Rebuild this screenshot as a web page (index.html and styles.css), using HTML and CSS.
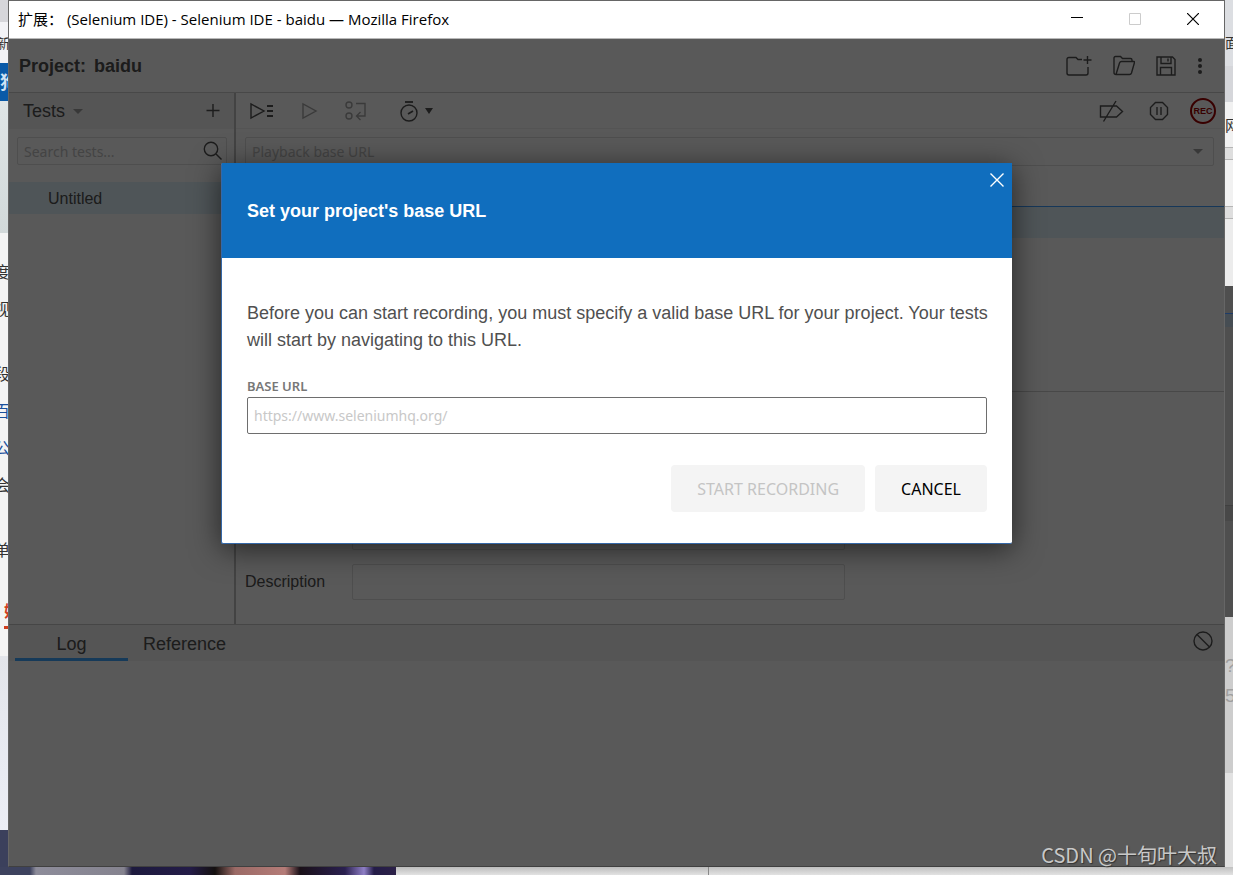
FILE: index.html
```
<!DOCTYPE html>
<html lang="zh-CN">

<head>
    <meta charset="UTF-8">
    <meta name="viewport" content="width=device-width, initial-scale=1.0">
    <title>Selenium IDE - baidu</title>
    <link rel="stylesheet" href="styles.css">
</head>

<body>
    <div class="desktop">
        <!-- left edge of the page behind the window -->
        <div class="behind behind-left">
            <div class="strip tabs-strip"></div>
            <div class="strip bookmark">新</div>
            <div class="strip search-btn">狗</div>
            <div class="strip banner"></div>
            <div class="strip news">
                <span>度</span>
                <span>视</span>
                <span class="gap">段</span>
                <span class="link">百</span>
                <span class="link">公</span>
                <span>会</span>
                <span class="gap">单</span>
                <span class="hot">娱</span>
            </div>
            <div class="strip sky"></div>
            <div class="strip photo-edge"></div>
        </div>

        <div class="window">
            <div class="titlebar">
                <span class="title">扩展： (Selenium IDE) - Selenium IDE - baidu — Mozilla Firefox</span>
                <div class="win-btns">
                    <button aria-label="Minimize">
                        <svg width="12" height="12" viewBox="0 0 12 12"><path d="M0 4.500h12" stroke="#000" stroke-width="1" /></svg>
                    </button>
                    <button aria-label="Maximize" disabled>
                        <svg width="12" height="12" viewBox="0 0 12 12"><path d="M.5.5h11v11H.5z" fill="none" stroke="#ccc" stroke-width="1" /></svg>
                    </button>
                    <button aria-label="Close window">
                        <svg width="12" height="12" viewBox="0 0 12 12"><path d="M0 0l12 12M12 0L0 12" stroke="#000" stroke-width="1.2" /></svg>
                    </button>
                </div>
            </div>

            <div class="ide">
                <header class="project">
                    <h1><span>Project:</span><span>baidu</span></h1>
                    <div class="project-btns">
                        <button aria-label="New project">
                            <svg width="26" height="22" viewBox="0 0 26 22"><path d="M16 4.500h-4l-2-2H3Q1 2.500 1 4.500V18q0 2 2 2h17q2 0 2-2v-6M21.500 1v8M17.500 5h8" /></svg>
                        </button>
                        <button aria-label="Open project">
                            <svg width="22" height="22" viewBox="0 0 22 22"><path d="M3 19.500Q1 19.500 1 17.500V3q0-1.500 1.500-1.500h5l2 2h8q1.500 0 1.500 1.500v1.500M3 19.500L6.500 8q.5-1.500 2-1.500h12.500q.8 0 .5 1L18.500 18q-.5 1.500-2 1.500z" /></svg>
                        </button>
                        <button aria-label="Save project">
                            <svg width="20" height="20" viewBox="0 0 20 20"><path d="M1 1h15.500L19 3.500V19H1zM5 1v6.500h10V1M12 2.500v3M4.500 19v-7.500h11V19" /></svg>
                        </button>
                        <button aria-label="More options">
                            <svg class="solid" width="6" height="16" viewBox="0 0 6 16"><circle cx="3" cy="2" r="2" /><circle cx="3" cy="8" r="2" /><circle cx="3" cy="14" r="2" /></svg>
                        </button>
                    </div>
                </header>

                <div class="main">
                    <aside class="tests">
                        <div class="tests-head">
                            <button class="tests-menu">Tests <i class="caret"></i></button>
                            <button aria-label="Add test">
                                <svg width="14" height="14" viewBox="0 0 14 14"><path d="M7 0v13M.5 6.500h13" /></svg>
                            </button>
                        </div>
                        <div class="search">
                            <input type="text" placeholder="Search tests..." aria-label="Search tests">
                            <svg width="20" height="20" viewBox="0 0 20 20"><circle cx="8" cy="8" r="6.700" /><path d="M13 13l5.500 5.500" /></svg>
                        </div>
                        <a class="test-item" href="#">Untitled</a>
                    </aside>

                    <section class="editor">
                        <div class="toolbar">
                            <button class="run-all" aria-label="Run all tests">
                                <svg width="26" height="18" viewBox="0 0 26 18"><path d="M2 2v14l13-7z" /><path d="M18 4h6M18 9h6M18 14h6" stroke-width="1.800" /></svg>
                            </button>
                            <button class="run faded" aria-label="Run current test">
                                <svg width="16" height="18" viewBox="0 0 16 18"><path d="M1 2v14l13-7z" /></svg>
                            </button>
                            <button class="step faded" aria-label="Step over">
                                <svg width="22" height="20" viewBox="0 0 22 20"><circle cx="4" cy="4" r="3" /><circle cx="4" cy="15" r="3" /><path d="M11 2.500h9v12.500h-8M15.500 11l-4 4 4 4" /></svg>
                            </button>
                            <button class="speed" aria-label="Test execution speed">
                                <svg width="34" height="22" viewBox="0 0 34 22"><circle cx="9" cy="13" r="8" /><path d="M5 2h8" stroke-width="1.800" /><path d="M8 14l5-3" stroke-width="1.800" /><path class="solid" d="M25 8h8l-4 6z" /></svg>
                            </button>
                            <button class="push" aria-label="Disable breakpoints">
                                <svg width="26" height="22" viewBox="0 0 26 22"><path d="M1.500 6h16l6 5.500-6 5.500h-16zM17 1L4.500 21.500" /></svg>
                            </button>
                            <button class="pause" aria-label="Pause on exceptions">
                                <svg width="20" height="20" viewBox="0 0 20 20"><path d="M6.500 1.500h7l5 5v7l-5 5h-7l-5-5v-7zM8 6v8M12 6v8" /></svg>
                            </button>
                            <button class="rec">REC</button>
                        </div>

                        <div class="url-bar">
                            <input type="text" placeholder="Playback base URL" aria-label="Playback base URL">
                            <i class="caret"></i>
                        </div>

                        <div class="commands">
                            <div class="command-row"></div>
                        </div>

                        <form class="fields">
                            <div class="field">
                                <input type="text" aria-label="Value">
                            </div>
                            <div class="field">
                                <label for="description">Description</label>
                                <input type="text" id="description">
                            </div>
                        </form>
                    </section>
                </div>

                <footer class="console">
                    <nav class="tabs">
                        <a class="active" href="#">Log</a>
                        <a href="#">Reference</a>
                        <button aria-label="Clear log">
                            <svg width="20" height="20" viewBox="0 0 20 20"><circle cx="10" cy="10" r="9" /><path d="M4 3.500l12.500 12.500" /></svg>
                        </button>
                    </nav>
                </footer>

                <div class="overlay">
                    <div class="modal" role="dialog" aria-labelledby="modal-title">
                        <div class="modal-head">
                            <h2 id="modal-title">Set your project's base URL</h2>
                            <button class="close" aria-label="Close">
                                <svg width="14" height="14" viewBox="0 0 14 14"><path d="M.5.5l13 13M13.500.5l-13 13" /></svg>
                            </button>
                        </div>
                        <form class="modal-body">
                            <p>Before you can start recording, you must specify a valid base URL for your project. Your tests will start by navigating to this URL.</p>
                            <label for="base-url">BASE URL</label>
                            <input type="text" id="base-url" placeholder="https://www.seleniumhq.org/">
                            <div class="modal-btns">
                                <button type="submit" disabled>START RECORDING</button>
                                <button type="button">CANCEL</button>
                            </div>
                        </form>
                    </div>
                </div>
            </div>
        </div>

        <!-- right edge of the page behind the window -->
        <div class="behind behind-right">
            <div class="strip r-tabs">面</div>
            <div class="strip r-bar"></div>
            <div class="strip r-link">网</div>
            <div class="strip r-line"></div>
            <div class="strip r-white"></div>
            <div class="strip r-line"></div>
            <div class="strip r-blank"></div>
            <div class="strip r-window">
                <div class="r-row"></div>
                <div class="r-log"></div>
            </div>
            <div class="strip r-text"><span>?</span><span>5</span></div>
            <div class="strip r-foot"></div>
        </div>

        <div class="behind-bottom">
            <div class="photo"></div>
            <div class="page-foot"></div>
            <div class="page-side"></div>
        </div>

        <div class="watermark">CSDN @十旬叶大叔</div>
    </div>
</body>

</html>
```
FILE: styles.css
```
* {
    box-sizing: border-box;
}

body {
    margin: 0;
    padding: 0;
    font-family: "Liberation Sans", "Noto Sans CJK SC", sans-serif;
    font-size: 16px;
    color: #505050;
}

h1,
h2,
p {
    margin: 0;
}

button {
    padding: 0;
    border: none;
    background: none;
    color: inherit;
    font-family: inherit;
}

svg {
    display: block;
    fill: none;
    stroke: #505050;
    stroke-width: 1.4;
}

.solid {
    fill: #505050;
    stroke: none;
}

.desktop {
    position: relative;
    display: grid;
    grid-template-columns: 8px 1fr 8px;
    grid-template-rows: 1fr 8px;
    height: 100vh;
    min-height: 700px;
    overflow: hidden;
    background: #666;
}

/* page behind the window */
.behind {
    display: flex;
    flex-direction: column;
    min-height: 0;
    overflow: hidden;
    font-family: "Noto Sans CJK SC", sans-serif;
    color: #333;
}

.strip {
    flex: none;
    overflow: hidden;
    white-space: nowrap;
}

.tabs-strip {
    height: 22px;
    background: #d6d6da;
}

.bookmark {
    height: 41px;
    line-height: 41px;
    font-size: 13px;
    text-indent: -3px;
    background: #f3f3f6;
}

.search-btn {
    height: 38px;
    line-height: 36px;
    font-size: 18px;
    font-weight: bold;
    color: #cfe3f5;
    background: #0a5aa8;
}

.banner {
    height: 132px;
    background: linear-gradient(#dfe5e6, #d2d9da);
}

.news {
    display: flex;
    flex-direction: column;
    height: 423px;
    padding-top: 20px;
    font-size: 16px;
    line-height: 37px;
    background: #f4f4f4;
}

.news span {
    height: 37px;
    margin-left: -6px;
}

.news .gap {
    margin-top: 28px;
}

.news .link {
    color: #1a4f9c;
}

.news .hot {
    margin: 24px 0 0 4px;
    font-weight: bold;
    color: #d13f1f;
    border-bottom: 3px solid #d13f1f;
}

.sky {
    height: 174px;
    background: linear-gradient(#e3e5ea, #eceef6);
}

.photo-edge {
    flex: 1;
    background: #3b405c;
}

.r-tabs {
    height: 66px;
    padding-top: 30px;
    font-size: 14px;
    line-height: 24px;
    background: #dcdee2;
}

.r-bar {
    height: 36px;
    background: #d5d6da;
}

.r-link {
    height: 45px;
    line-height: 45px;
    font-size: 15px;
    background: #f1f1f1;
}

.r-line {
    height: 13px;
    border: 1px solid #b5b5b5;
    border-width: 1px 0;
    background: #dedede;
}

.r-white {
    height: 46px;
    background: #f1f1f1;
}

.r-blank {
    height: 67px;
    background: #ececec;
}

.r-window {
    height: 331px;
    padding-top: 27px;
    background: #4f4f4f;
}

.r-row {
    height: 14px;
    border-top: 1px solid #1d3c69;
    background: #464d53;
}

.r-log {
    height: 16px;
    margin-top: 178px;
    border-top: 1px solid #404040;
    background: #484848;
}

.r-text {
    display: flex;
    flex-direction: column;
    height: 156px;
    padding-top: 34px;
    font: 19px/30px "Liberation Sans", sans-serif;
    color: #a0a0a0;
    background: #cdcdcd;
}

.r-foot {
    flex: 1;
    background: #e2e2e2;
}

.behind-bottom {
    grid-column: 1 / 4;
    display: flex;
}

.photo {
    flex: 0 0 396px;
    background: linear-gradient(90deg, #3d425e 30px, #8d8c9a 36px, #85838f 124px, #1d1a3e 132px, #241c48 190px, #14100f 215px, #9b6a66 235px, #b57c78 285px, #1a1018 300px, #2a2050 345px, #8f7fc6 364px, #241c48 374px, #2c2148);
}

.page-foot {
    flex: 1;
    background: linear-gradient(#bcbcbc, #e2e2e2);
    border-right: 1px solid #888;
}

.page-side {
    flex: 0 0 524px;
    background: linear-gradient(#c0c0c0, #e2e2e2);
}

/* window frame */
.window {
    display: flex;
    flex-direction: column;
    min-width: 0;
    min-height: 0;
    border: 1px solid #666;
    border-bottom-color: #404040;
}

.titlebar {
    display: flex;
    align-items: center;
    justify-content: space-between;
    height: 38px;
    padding: 0 25px 2px 9px;
    border-bottom: 1px solid #b8b8b8;
    background: #fff;
    color: #000;
}

.title {
    font-family: "Open Sans", "Noto Sans CJK SC", sans-serif;
    font-size: 15px;
    white-space: nowrap;
}

.win-btns {
    display: flex;
    gap: 46px;
}

/* selenium ide */
.ide {
    position: relative;
    display: flex;
    flex-direction: column;
    flex: 1;
    min-height: 0;
    background: #fff;
}

.project {
    display: flex;
    align-items: center;
    justify-content: space-between;
    height: 54px;
    padding: 0 21px 0 10px;
    border-bottom: 1px solid #cecece;
}

.project h1 {
    display: flex;
    gap: 8px;
    padding-top: 2px;
    font-size: 18px;
}

.project-btns {
    display: flex;
    align-items: center;
    gap: 21px;
}

.main {
    display: flex;
    flex: 1;
    min-height: 0;
}

.tests {
    width: 227px;
    border-right: 2px solid #c0c0c0;
}

.tests-head {
    display: flex;
    align-items: center;
    justify-content: space-between;
    height: 36px;
    padding: 0 14px;
    background: #f2f2f2;
}

.tests-menu {
    display: flex;
    align-items: center;
    gap: 8px;
    font-size: 18px;
}

.caret {
    border: 5px solid transparent;
    border-top-color: #a0a0a0;
    border-bottom: none;
}

.search {
    display: flex;
    align-items: center;
    height: 28px;
    margin: 8px 7px 17px 8px;
    padding-right: 3px;
    border: 1px solid #dedede;
    border-radius: 2px;
}

.search input,
.url-bar input {
    flex: 1;
    min-width: 0;
    padding: 0 6px;
    border: none;
    font-family: "Noto Sans", sans-serif;
    font-size: 14px;
    background: none;
}

.search input::placeholder,
.url-bar input::placeholder {
    color: #c2c2c2;
}

.test-item {
    display: block;
    padding-left: 39px;
    line-height: 33px;
    height: 32px;
    color: inherit;
    text-decoration: none;
    background: #e3f3fb;
}

.editor {
    display: flex;
    flex-direction: column;
    flex: 1;
    min-width: 0;
}

.toolbar {
    display: flex;
    align-items: center;
    height: 36px;
    padding: 0 8px 0 13px;
    border-bottom: 1px solid #f0f0f0;
}

.run,
.step {
    margin-left: 27px;
}

.speed {
    margin-left: 33px;
}

.push {
    margin-left: auto;
}

.pause {
    margin: 0 13px 0 24px;
}

.faded {
    opacity: .5;
}

.rec {
    width: 26px;
    height: 26px;
    margin-left: 8px;
    border: 2px solid #a00000;
    border-radius: 50%;
    font-size: 9px;
    font-weight: bold;
    color: #a00000;
}

.url-bar {
    display: flex;
    align-items: center;
    height: 29px;
    margin: 8px 10px 0 9px;
    padding-right: 10px;
    border: 1px solid #dedede;
    border-radius: 2px;
}

.commands {
    height: 186px;
    margin-top: 40px;
    border-top: 1px solid #409fff;
    border-bottom: 1px solid #cecece;
}

.command-row {
    height: 31px;
    background: #e3f3fb;
}

.fields {
    display: flex;
    flex-direction: column;
    justify-content: flex-end;
    gap: 14px;
    flex: 1;
    padding: 0 0 24px 9px;
}

.field {
    display: flex;
    align-items: center;
    justify-content: flex-end;
    width: 600px;
}

.field label {
    flex: 1;
}

.field input {
    width: 493px;
    height: 36px;
    border: 1px solid #dedede;
    border-radius: 2px;
}

.console {
    height: 242px;
    border-top: 1px solid #c8c8c8;
}

.tabs {
    display: flex;
    height: 36px;
    padding: 0 11px 0 6px;
    background: #f2f2f2;
}

.tabs a {
    width: 113px;
    border-bottom: 3px solid transparent;
    font-size: 18px;
    line-height: 38px;
    text-align: center;
    color: inherit;
    text-decoration: none;
}

.tabs .active {
    border-color: #40a6ff;
}

.tabs button {
    margin: 0 0 5px auto;
}

/* base url dialog */
.overlay {
    position: absolute;
    inset: 0;
    padding-top: 124px;
    background: rgba(0, 0, 0, .65);
}

.modal {
    width: 791px;
    max-width: 100%;
    margin: 0 auto;
    border: 1px solid #3568a8;
    border-width: 0 0 1px 1px;
    border-radius: 2px;
    background: #fff;
    box-shadow: 0 5px 30px rgba(0, 0, 0, .6);
}

.modal-head {
    position: relative;
    height: 95px;
    padding: 0 25px;
    line-height: 97px;
    color: #fff;
    background: #106ebe;
}

.modal-head h2 {
    font-size: 18px;
}

.close {
    position: absolute;
    top: 10px;
    right: 8px;
}

.close svg {
    stroke: #fff;
}

.modal-body {
    padding: 42px 25px 31px;
}

.modal-body p {
    margin: 0 -10px 22px 0;
    font-size: 18px;
    line-height: 27px;
}

.modal-body label {
    display: block;
    font-family: "Noto Sans", sans-serif;
    font-size: 13px;
    font-weight: 600;
    line-height: 20px;
    color: #777;
}

.modal-body input {
    display: block;
    width: 100%;
    height: 37px;
    margin: 1px 0 31px;
    padding: 0 6px;
    border: 1px solid #6e6e6e;
    border-radius: 2px;
    font-family: "Noto Sans", sans-serif;
    font-size: 14px;
}

.modal-body input::placeholder {
    color: #c8c8c8;
}

.modal-btns {
    display: flex;
    justify-content: flex-end;
    gap: 10px;
}

.modal-btns button {
    height: 47px;
    padding: 0 26px;
    border-radius: 4px;
    font-family: "Noto Sans", sans-serif;
    font-size: 16px;
    color: #000;
    background: #f4f4f4;
}

.modal-btns button:disabled {
    color: #c4c4c4;
}

.watermark {
    position: absolute;
    right: 16px;
    bottom: 5px;
    font-family: "Noto Sans CJK SC", sans-serif;
    font-size: 20px;
    line-height: 30px;
    color: #c8c8c8;
    text-shadow: 1px 1px 1px #333;
}
```
